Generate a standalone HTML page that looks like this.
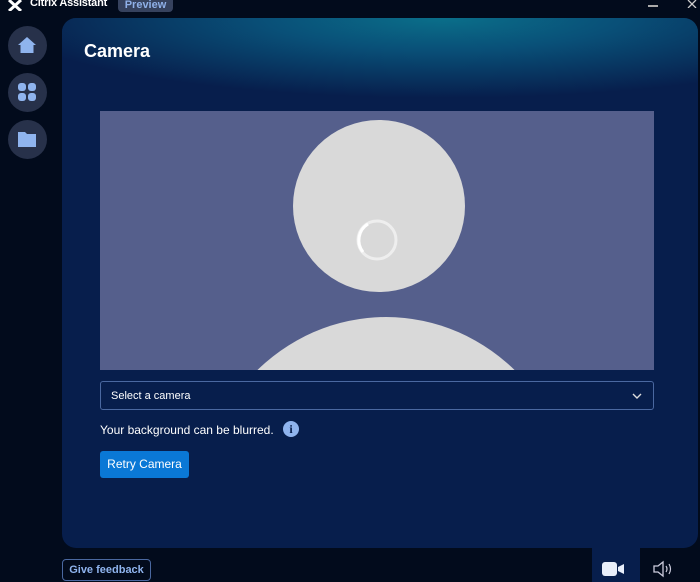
<!DOCTYPE html>
<html><head><meta charset="utf-8"><style>
*{margin:0;padding:0;box-sizing:border-box}
html,body{width:700px;height:582px;overflow:hidden}
body{background:#020b1c;position:relative;font-family:"Liberation Sans",sans-serif;color:#fff}
.abs{position:absolute}
.side{left:8px;width:39px;height:39px;border-radius:50%;background:#27314a}
.panel{left:62px;top:18px;width:636px;height:530px;border-radius:14px;background:#071e4c;overflow:hidden}
.grad{left:0;top:0;width:636px;height:80px;background:radial-gradient(ellipse 440px 80px at 380px 0px,#0a6f8a 0%,#095078 40%,#071e4c 100%)}
</style></head><body>
<svg class="abs" style="left:8px;top:0" width="14" height="11" viewBox="0 0 14 11"><path d="M1 0 L13 11 M13 0 L1 11" stroke="#fff" stroke-width="3"/></svg>
<div class="abs" style="left:30px;top:-3px;font-size:11px;font-weight:bold;letter-spacing:-0.2px">Citrix Assistant</div>
<div class="abs" style="left:118px;top:-6px;width:55px;height:18px;border-radius:4px;background:#36425e;color:#8fb0e8;font-size:11px;font-weight:bold;text-align:center;line-height:22px">Preview</div>
<div class="abs" style="left:648px;top:5px;width:10px;height:1.5px;background:#aaa"></div>
<svg class="abs" style="left:687px;top:0" width="10" height="8"><path d="M1 0L9 8M9 0L1 8" stroke="#ccc" stroke-width="1.3"/></svg>
<div class="abs side" style="top:26px"></div>
<div class="abs side" style="top:73px"></div>
<div class="abs side" style="top:120px"></div>
<svg class="abs" style="left:17px;top:35px" width="20" height="20" viewBox="0 0 20 20"><path d="M10 2 L19 10 L16.5 10 L16.5 18 L3.5 18 L3.5 10 L1 10 Z" fill="#8fb4ee"/></svg>
<svg class="abs" style="left:17px;top:82px" width="20" height="20" viewBox="0 0 20 20"><rect x="1" y="1" width="8" height="8" rx="3" fill="#8fb4ee"/><rect x="11" y="1" width="8" height="8" rx="3" fill="#8fb4ee"/><rect x="1" y="11" width="8" height="8" rx="3" fill="#8fb4ee"/><rect x="11" y="11" width="8" height="8" rx="3" fill="#8fb4ee"/></svg>
<svg class="abs" style="left:17px;top:129px" width="20" height="20" viewBox="0 0 20 20"><path d="M1 3 L8 3 L10 5 L19 5 L19 18 L1 18 Z" fill="#8fb4ee"/></svg>
<div class="abs panel"><div class="abs grad"></div>
<div class="abs" style="left:22px;top:23px;font-size:18px;font-weight:bold">Camera</div>
<svg class="abs" style="left:38px;top:93px" width="554" height="259"><rect width="554" height="259" fill="#555f8c"/><circle cx="279" cy="95" r="86" fill="#d9d9d9"/><ellipse cx="286" cy="407" rx="190" ry="201" fill="#d9d9d9"/><circle cx="277" cy="129" r="19" fill="none" stroke="#eee" stroke-width="3"/><path d="M268 113 A19 19 0 0 0 263 141" fill="none" stroke="#fff" stroke-width="3"/></svg>
<div class="abs" style="left:38px;top:363px;width:554px;height:29px;border:1px solid #4a68a0;border-radius:3px;font-size:11px;padding:8px 10px">Select a camera</div>
<svg class="abs" style="left:570px;top:375px" width="10" height="6"><path d="M1 1L5 5L9 1" fill="none" stroke="#ddd" stroke-width="1.4"/></svg>
<div class="abs" style="left:38px;top:405px;font-size:12px">Your background can be blurred.</div>
<div class="abs" style="left:221px;top:403px;width:16px;height:16px;border-radius:50%;background:#8fb4ee;color:#071e4c;font-size:12px;font-weight:bold;text-align:center;line-height:16px;font-family:'Liberation Serif',serif">i</div>
<div class="abs" style="left:38px;top:433px;width:89px;height:27px;border-radius:3px;background:#0a78d6;font-size:12px;text-align:center;line-height:27px">Retry Camera</div>
</div>
<div class="abs" style="left:62px;top:559px;width:89px;height:22px;border:1px solid #4a68a0;border-radius:4px;color:#8fb4ee;font-size:11px;font-weight:bold;text-align:center;line-height:20px">Give feedback</div>
<div class="abs" style="left:592px;top:548px;width:48px;height:34px;background:#071e4c"></div>
<svg class="abs" style="left:601px;top:561px" width="24" height="16"><rect x="1" y="1" width="15" height="14" rx="3" fill="#e8eefa"/><path d="M17 6L23 3L23 13L17 10Z" fill="#e8eefa"/></svg>
<svg class="abs" style="left:652px;top:560px" width="24" height="18"><path d="M2 6H6L11 2V16L6 12H2Z" fill="none" stroke="#ccd" stroke-width="1.3"/><path d="M14 6Q16 9 14 12M17 4Q20 9 17 14" fill="none" stroke="#ccd" stroke-width="1.2"/></svg>
</body></html>
